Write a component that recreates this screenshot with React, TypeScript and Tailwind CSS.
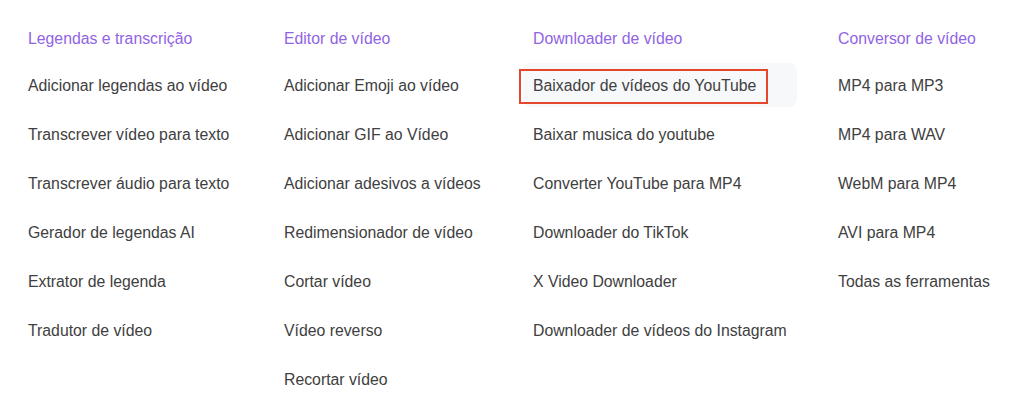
import React from 'react';

interface Column {
  title: string;
  items: string[];
  width: string;
}

const columns: Column[] = [
  {
    title: 'Legendas e transcrição',
    width: 'w-[225px]',
    items: [
      'Adicionar legendas ao vídeo',
      'Transcrever vídeo para texto',
      'Transcrever áudio para texto',
      'Gerador de legendas AI',
      'Extrator de legenda',
      'Tradutor de vídeo',
    ],
  },
  {
    title: 'Editor de vídeo',
    width: 'w-[218px]',
    items: [
      'Adicionar Emoji ao vídeo',
      'Adicionar GIF ao Vídeo',
      'Adicionar adesivos a vídeos',
      'Redimensionador de vídeo',
      'Cortar vídeo',
      'Vídeo reverso',
      'Recortar vídeo',
    ],
  },
  {
    title: 'Downloader de vídeo',
    width: 'w-[274px]',
    items: [
      'Baixador de vídeos do YouTube',
      'Baixar musica do youtube',
      'Converter YouTube para MP4',
      'Downloader do TikTok',
      'X Video Downloader',
      'Downloader de vídeos do Instagram',
    ],
  },
  {
    title: 'Conversor de vídeo',
    width: 'w-[180px]',
    items: ['MP4 para MP3', 'MP4 para WAV', 'WebM para MP4', 'AVI para MP4', 'Todas as ferramentas'],
  },
];

const ACTIVE = 'Baixador de vídeos do YouTube';

export default function App() {
  return (
    <div
      className="w-[1024px] h-[419px] bg-white overflow-hidden pl-[18px] pt-[27px]"
      style={{ fontFamily: '"Liberation Sans", Arial, sans-serif' }}
    >
      <div className="flex gap-x-[31px]">
        {columns.map((col) => (
          <div key={col.title} className={`${col.width} flex flex-col`}>
            <div className="px-[10px] leading-[24px] text-[15.8px] text-[#9164e4]">{col.title}</div>
            <ul className="mt-[12px] flex flex-col gap-[5px]">
              {col.items.map((item) => {
                const active = item === ACTIVE;
                return (
                  <li
                    key={item}
                    className={`relative h-[44px] flex items-center pt-px px-[10px] rounded-lg text-[15.8px] text-[#404040] whitespace-nowrap ${
                      active ? 'bg-[#f7f8fa]' : ''
                    }`}
                  >
                    {item}
                    {active && (
                      <span className="absolute left-[-4px] top-[6px] w-[249px] h-[35px] border-2 border-[#e5472d]" />
                    )}
                  </li>
                );
              })}
            </ul>
          </div>
        ))}
      </div>
    </div>
  );
}
